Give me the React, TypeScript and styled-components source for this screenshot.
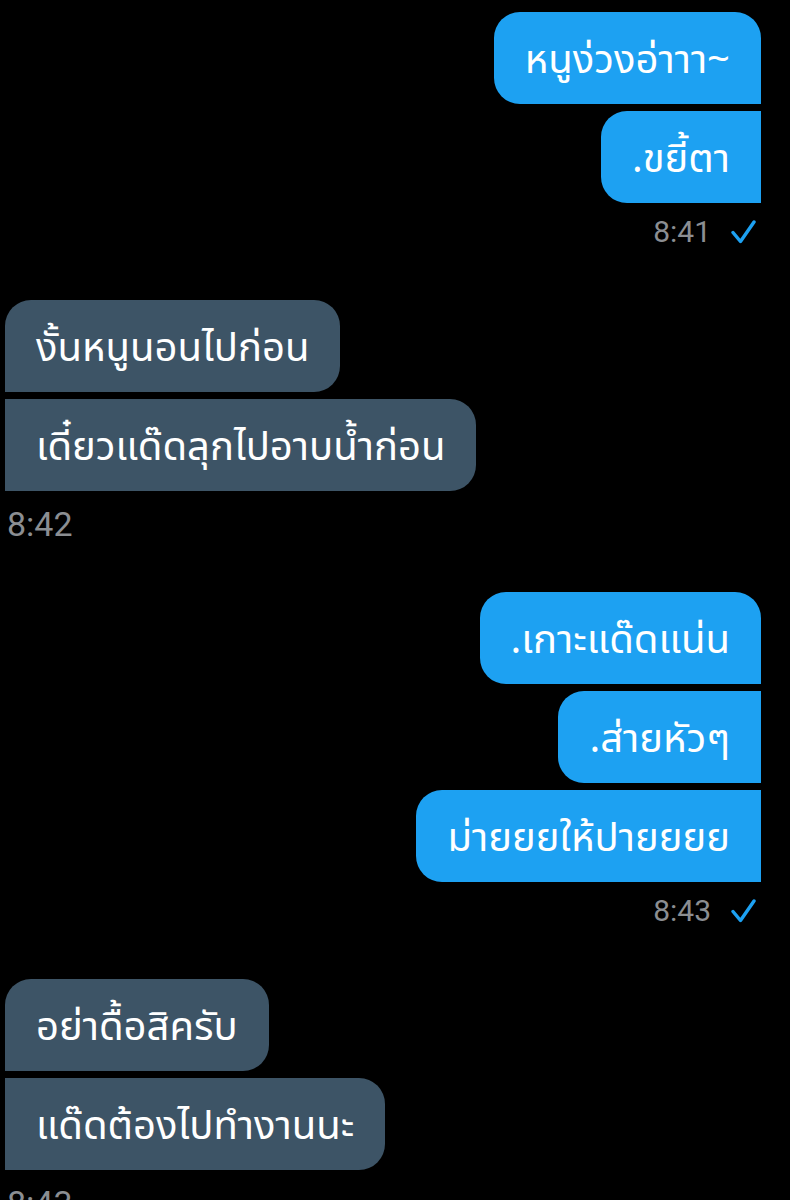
import React from 'react';
import styled, { createGlobalStyle, css } from 'styled-components';

const GlobalStyle = createGlobalStyle`
    html, body {
        margin: 0;
        padding: 0;
        background: #000000;
    }
    body {
        font-family: "Noto Sans", "Noto Sans Thai", Loma, Garuda, sans-serif;
    }
`;

type Side = 'in' | 'out';
type Place = 'first' | 'middle' | 'last';

const Screen = styled.div`
    width: 790px;
    height: 1200px;
    overflow: hidden;
    background: #000000;
    padding: 12px 29px 0 5px;
    box-sizing: border-box;
    display: flex;
    flex-direction: column;
`;

const Group = styled.div<{ $side: Side }>`
    display: flex;
    flex-direction: column;
    align-items: ${(p) => (p.$side === 'out' ? 'flex-end' : 'flex-start')};
    gap: 7px;
    margin-bottom: 48px;
`;

const radius = 26;

const cornerFor = (side: Side, place: Place) => {
    const r = `${radius}px`;
    if (side === 'out') {
        const tr = place === 'first' ? r : '0';
        return css`border-radius: ${r} ${tr} 0 ${r};`;
    }
    const tl = place === 'first' ? r : '0';
    return css`border-radius: ${tl} ${r} ${r} 0;`;
};

const Bubble = styled.div<{ $side: Side; $place: Place }>`
    height: 92px;
    box-sizing: border-box;
    padding: 0 31px;
    display: flex;
    align-items: center;
    font-size: 40px;
    line-height: 1;
    color: #ffffff;
    white-space: nowrap;
    background: ${(p) => (p.$side === 'out' ? '#1da1f2' : '#3d5466')};
    ${(p) => cornerFor(p.$side, p.$place)}
`;

const Meta = styled.div<{ $side: Side }>`
    display: flex;
    align-items: center;
    gap: 20px;
    height: 40px;
    margin-top: ${(p) => (p.$side === 'out' ? '2px' : '6px')};
    padding-right: ${(p) => (p.$side === 'out' ? '5px' : '0')};
    padding-left: ${(p) => (p.$side === 'in' ? '2px' : '0')};
    font-family: Roboto, "Liberation Sans", sans-serif;
    font-size: ${(p) => (p.$side === 'out' ? '30px' : '34px')};
    line-height: 40px;
    color: #8b8e92;
`;

const Check = () => (
    <svg width="25" height="24" viewBox="0 0 25 24" fill="none">
        <path d="M2 12.5 L9.5 21.5 L23 2" stroke="#1da1f2" strokeWidth="3.4" strokeLinecap="round" strokeLinejoin="round" />
    </svg>
);

interface Message {
    side: Side;
    lines: string[];
    time: string;
    read?: boolean;
}

const messages: Message[] = [
    { side: 'out', lines: ['หนูง่วงอ่าาา~', '.ขยี้ตา'], time: '8:41', read: true },
    { side: 'in', lines: ['งั้นหนูนอนไปก่อน', 'เดี๋ยวแด๊ดลุกไปอาบน้ำก่อน'], time: '8:42' },
    { side: 'out', lines: ['.เกาะแด๊ดแน่น', '.ส่ายหัวๆ', 'ม่ายยยให้ปายยยย'], time: '8:43', read: true },
    { side: 'in', lines: ['อย่าดื้อสิครับ', 'แด๊ดต้องไปทำงานนะ'], time: '8:43' },
];

const placeOf = (i: number, n: number): Place => (i === 0 ? 'first' : i === n - 1 ? 'last' : 'middle');

const App = () => (
    <>
        <GlobalStyle />
        <Screen>
            {messages.map((m, gi) => (
                <Group key={gi} $side={m.side}>
                    {m.lines.map((line, i) => (
                        <Bubble key={i} $side={m.side} $place={placeOf(i, m.lines.length)}>
                            {line}
                        </Bubble>
                    ))}
                    <Meta $side={m.side}>
                        <span>{m.time}</span>
                        {m.read && <Check />}
                    </Meta>
                </Group>
            ))}
        </Screen>
    </>
);

export default App;
